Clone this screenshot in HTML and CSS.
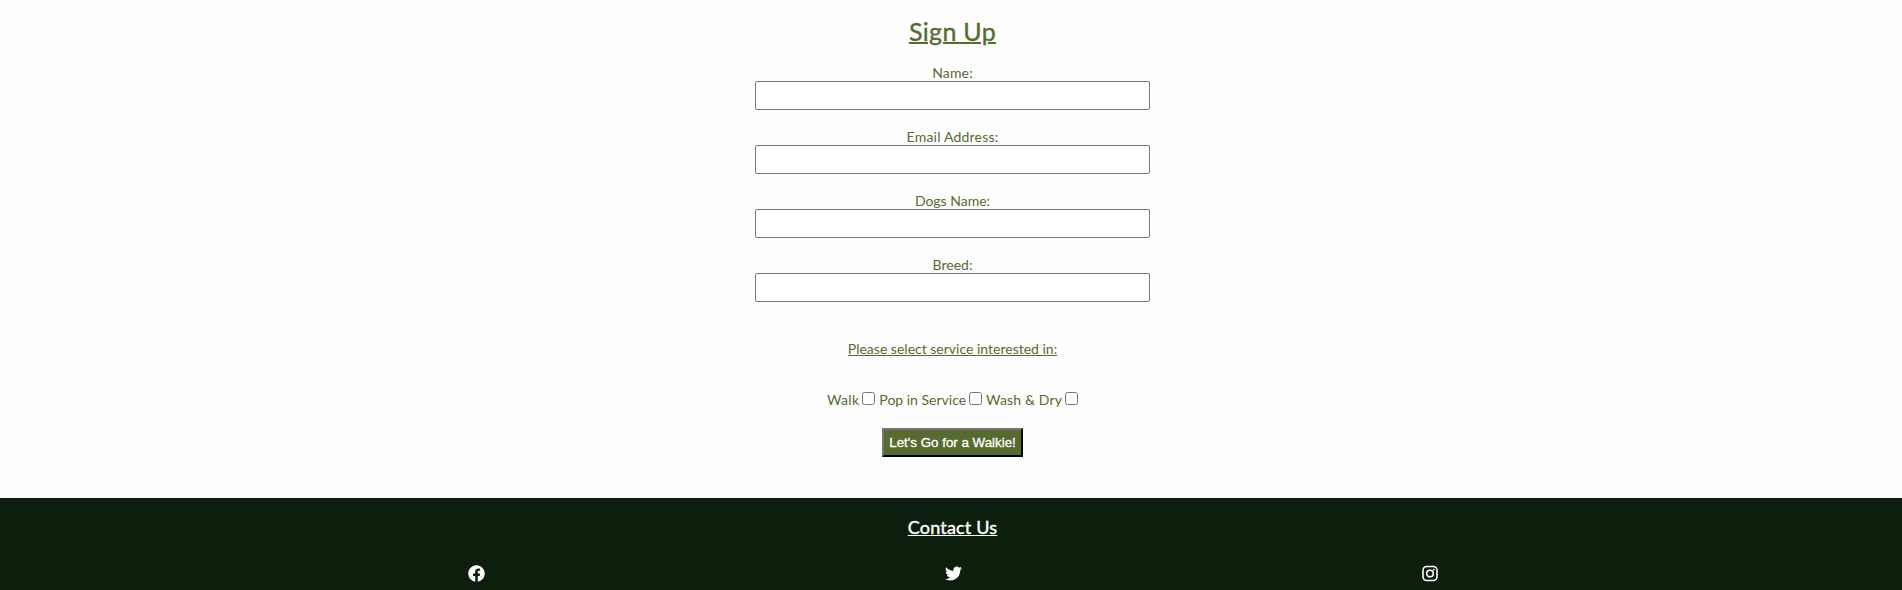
FILE: index.html
```html
<!DOCTYPE html>
<html lang="en">
<head>
<meta charset="utf-8">
<title>Sign Up</title>
<link rel="stylesheet" href="styles.css">
</head>
<body>
<main class="signup">
  <h1 class="title"><span>Sign Up</span></h1>
  <form class="form">
    <div class="field"><label class="label name" for="name">Name:</label><input class="input" id="name" type="text"></div>
    <div class="field"><label class="label email" for="email">Email Address:</label><input class="input" id="email" type="text"></div>
    <div class="field"><label class="label dog" for="dog">Dogs Name:</label><input class="input" id="dog" type="text"></div>
    <div class="field"><label class="label breed" for="breed">Breed:</label><input class="input" id="breed" type="text"></div>
    <p class="prompt">Please select service interested in:</p>
    <div class="services">
      <label class="service walk" for="walk">Walk</label><input class="check" id="walk" type="checkbox">
      <label class="service pop" for="pop">Pop in Service</label><input class="check" id="pop" type="checkbox">
      <label class="service wash" for="wash">Wash &amp; Dry</label><input class="check" id="wash" type="checkbox">
    </div>
    <button class="submit" type="button">Let's Go for a Walkie!</button>
  </form>
</main>
<footer class="footer">
  <h2 class="contact"><span>Contact Us</span></h2>
  <div class="social">
    <a class="link" aria-label="Facebook"><svg width="17" height="17" viewBox="0 0 512 512"><path fill="#fff" d="M504 256C504 119 393 8 256 8S8 119 8 256c0 123.780 90.690 226.380 209.250 245V327.690h-63V256h63v-54.640c0-62.150 37-96.480 93.670-96.480 27.140 0 55.520 4.840 55.520 4.840v61h-31.280c-30.800 0-40.410 19.120-40.410 38.730V256h68.780l-11 71.690h-57.780V501C413.310 482.380 504 379.780 504 256z"/></svg></a>
    <a class="link" aria-label="Twitter"><svg width="17" height="17" viewBox="0 0 512 512"><path fill="#fff" d="M459.370 151.716c.325 4.548.325 9.097.325 13.645 0 138.720-105.583 298.558-298.558 298.558-59.452 0-114.680-17.219-161.137-47.106 8.447.974 16.568 1.299 25.340 1.299 49.055 0 94.213-16.568 130.274-44.832-46.132-.975-84.792-31.188-98.112-72.772 6.498.974 12.995 1.624 19.818 1.624 9.421 0 18.843-1.300 27.614-3.573-48.081-9.747-84.143-51.980-84.143-102.985v-1.299c13.969 7.797 30.214 12.670 47.431 13.319-28.264-18.843-46.781-51.005-46.781-87.391 0-19.492 5.197-37.360 14.294-52.954 51.655 63.675 129.300 105.258 216.365 109.807-1.624-7.797-2.599-15.918-2.599-24.040 0-57.828 46.782-104.934 104.934-104.934 30.213 0 57.502 12.670 76.670 33.137 23.715-4.548 46.456-13.320 66.599-25.340-7.798 24.366-24.366 44.833-46.132 57.827 21.117-2.273 41.584-8.122 60.426-16.243-14.292 20.791-32.161 39.308-52.628 54.253z"/></svg></a>
    <a class="link" aria-label="Instagram"><svg width="16" height="17" viewBox="0 0 16 17" fill="none" stroke="#fff"><rect x="1" y="1.500" width="14" height="14" rx="3.800" stroke-width="1.600"/><circle cx="8" cy="8.500" r="3.300" stroke-width="1.600"/><circle cx="11.900" cy="4.600" r=".9" fill="#fff" stroke="none"/></svg></a>
  </div>
</footer>
</body>
</html>
```
FILE: styles.css
```css
* { box-sizing: border-box; }
body {
  margin: 0;
  height: 590px;
  overflow: hidden;
  background: #fefefe;
  color: #556b2f;
  font: 14px/18px Lato, "Open Sans", sans-serif;
}
.signup {
  height: 498px;
  padding: 15px 0 0 3px;
}
.title {
  margin: 0;
  height: 48px;
  font-size: 25px;
  font-weight: 400;
  line-height: 32px;
  letter-spacing: .3px;
  text-align: center;
  text-decoration: underline;
  text-decoration-thickness: 2px;
  -webkit-text-stroke: .35px;
}
.form {
  display: flex;
  flex-direction: column;
  align-items: center;
}
.field {
  display: flex;
  flex-direction: column;
  align-items: center;
  height: 64px;
}
.label { height: 18px; line-height: 20px; }
.name { letter-spacing: .15px; }
.email { letter-spacing: .2px; }
.input {
  width: 395px;
  height: 29px;
  margin: 0;
  border: 1px solid #767676;
  border-radius: 2px;
  background: #fff;
}
.prompt {
  margin: 21px 0 0;
  line-height: 18px;
  text-decoration: underline;
}
.services {
  display: flex;
  align-items: center;
  height: 18px;
  margin-top: 31px;
}
.service { padding-top: 3px; white-space: nowrap; }
.walk { letter-spacing: .35px; }
.wash { letter-spacing: .15px; }
.check { width: 13px; height: 13px; margin: 0 4px 0 3px; }
.check:last-child { margin-right: 0; }
.submit {
  width: 141px;
  height: 29px;
  margin-top: 21px;
  padding: 0;
  border: 2px outset #000;
  border-color: #767676 #212121 #212121 #767676;
  background: #556b2f;
  color: #fff;
  font: 13.333px "Liberation Sans", Arial, sans-serif;
  -webkit-text-stroke: .3px;
}
.footer {
  height: 92px;
  padding-top: 17px;
  background: #0d1f0c;
  color: #fff;
}
.contact {
  margin: 0;
  padding-left: 3px;
  font-size: 18px;
  font-weight: 400;
  line-height: 24px;
  letter-spacing: .2px;
  text-align: center;
  text-decoration: underline;
  -webkit-text-stroke: .4px;
}
.social {
  display: flex;
  justify-content: space-between;
  width: 970px;
  margin: 26px auto 0;
  transform: translate(2px, 0);
}
.link { display: flex; }
```
